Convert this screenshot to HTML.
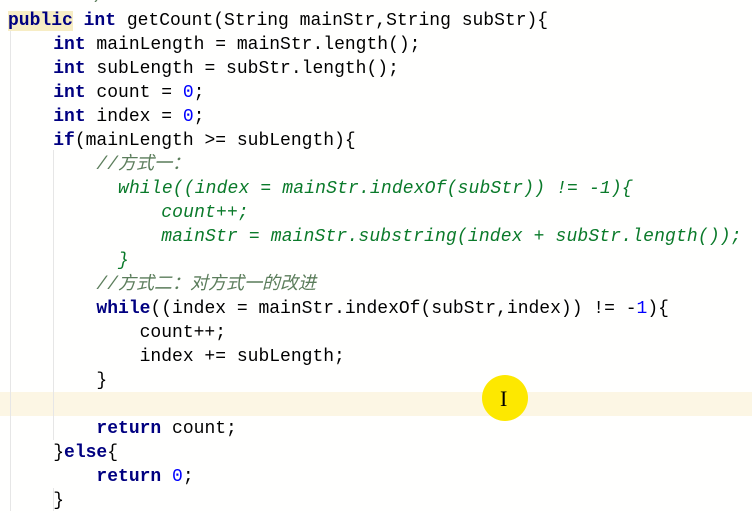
<!DOCTYPE html>
<html><head><meta charset="utf-8"><style>
body{margin:0;width:752px;height:511px;background:#fffffe;overflow:hidden;position:relative}
.l{position:absolute;left:8px;height:24px;line-height:24px;white-space:pre;font-family:"Liberation Mono","Noto Sans CJK SC",monospace;font-size:18px;color:#000}
.k{color:#000080;font-weight:bold}
.n{color:#0000ff}
.c{color:#5b7d5b;font-style:italic}
.g{color:#0a7a2a;font-style:italic;letter-spacing:0.15px}
.guide{position:absolute;width:1px;background:#e6e6e6}
</style></head><body>
<div style="position:absolute;left:0;top:392px;width:752px;height:24px;background:#fcf6e4"></div>
<div class="guide" style="left:10px;top:30px;height:481px"></div>
<div class="guide" style="left:53px;top:150px;height:290px"></div>
<div class="guide" style="left:53px;top:488px;height:23px"></div>
<div class="l" style="top:-14px"><span class="c">        /</span></div>
<div class="l" style="top:9px"><span class="k" style="background:#f7edc4">public</span> <span class="k">int</span> getCount(String mainStr,String subStr){</div>
<div class="l" style="top:33px;left:10px">    <span class="k">int</span> mainLength = mainStr.length();</div>
<div class="l" style="top:57px;left:10px">    <span class="k">int</span> subLength = subStr.length();</div>
<div class="l" style="top:81px;left:10px">    <span class="k">int</span> count = <span class="n">0</span>;</div>
<div class="l" style="top:105px;left:10px">    <span class="k">int</span> index = <span class="n">0</span>;</div>
<div class="l" style="top:129px;left:10px">    <span class="k">if</span>(mainLength &gt;= subLength){</div>
<div class="l" style="top:153px;left:10px">        <span class="c">//方式一：</span></div>
<div class="l" style="top:177px;left:10px">          <span class="g">while((index = mainStr.indexOf(subStr)) != -1){</span></div>
<div class="l" style="top:201px;left:10px">              <span class="g">count++;</span></div>
<div class="l" style="top:225px;left:10px">              <span class="g">mainStr = mainStr.substring(index + subStr.length());</span></div>
<div class="l" style="top:249px;left:10px">          <span class="g">}</span></div>
<div class="l" style="top:273px;left:10px">        <span class="c">//方式二：对方式一的改进</span></div>
<div class="l" style="top:297px;left:10px">        <span class="k">while</span>((index = mainStr.indexOf(subStr,index)) != -<span class="n">1</span>){</div>
<div class="l" style="top:321px;left:10px">            count++;</div>
<div class="l" style="top:345px;left:10px">            index += subLength;</div>
<div class="l" style="top:369px;left:10px">        }</div>
<div class="l" style="top:417px;left:10px">        <span class="k">return</span> count;</div>
<div class="l" style="top:441px;left:10px">    }<span class="k">else</span>{</div>
<div class="l" style="top:465px;left:10px">        <span class="k">return</span> <span class="n">0</span>;</div>
<div class="l" style="top:489px;left:10px">    }</div>
<div style="position:absolute;left:482px;top:375px;width:46px;height:46px;border-radius:50%;background:#fde800"></div>
<div style="position:absolute;left:500px;top:388px;font-family:'Liberation Serif',serif;font-size:22px;line-height:22px;color:#000">I</div>
</body></html>
